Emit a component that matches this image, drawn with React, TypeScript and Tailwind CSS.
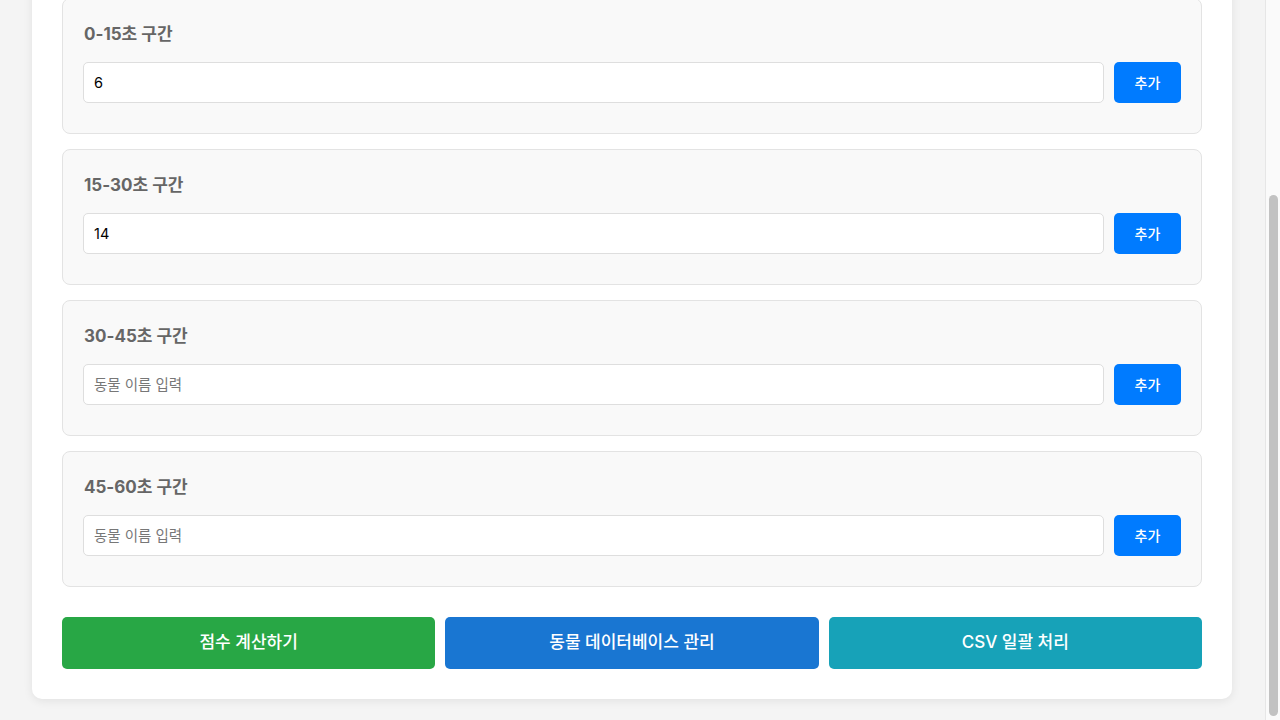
import React from "react";

const font = { fontFamily: "Inter, 'Noto Sans CJK KR', sans-serif" };

const segments = [
  { label: "0-15초 구간", value: "6" },
  { label: "15-30초 구간", value: "14" },
  { label: "30-45초 구간", value: "" },
  { label: "45-60초 구간", value: "" },
];

function Segment({ label, value }: { label: string; value: string }) {
  return (
    <div className="mb-[15px] rounded-lg border border-[#e3e3e3] bg-[#f9f9f9] px-5 pt-5 pb-[30px]">
      <div className="mb-[11px] flex h-[32px] items-center pl-px text-[17px] font-bold text-[#666]">{label}</div>
      <div className="flex gap-[10px]">
        <input
          defaultValue={value}
          placeholder="동물 이름 입력"
          className="h-[41px] flex-1 rounded-[5px] border border-[#dedede] bg-white px-[10px] text-[14.5px] text-black outline-none placeholder:text-[#777]"
        />
        <button className="h-[41px] w-[67px] rounded-[5px] bg-[#007bff] text-[14px] font-medium text-white">추가</button>
      </div>
    </div>
  );
}

export default function App() {
  return (
    <div className="flex h-[720px] w-full overflow-hidden bg-[#f4f4f4]" style={font}>
      <div className="flex flex-1 flex-col justify-end overflow-hidden pb-[21px]">
        <div className="ml-[32px] w-[1200px] shrink-0 rounded-[10px] bg-white px-[30px] pt-[30px] pb-[30px] shadow-[0_2px_10px_rgba(0,0,0,0.08)]">
          {segments.map((s) => (
            <Segment key={s.label} label={s.label} value={s.value} />
          ))}
          <div className="mt-[30px] grid grid-cols-3 gap-[10px]">
            <button className="h-[52px] rounded-[5px] bg-[#28a745] text-[17px] font-medium text-white">점수 계산하기</button>
            <button className="h-[52px] rounded-[5px] bg-[#1976d2] text-[17px] font-medium text-white">동물 데이터베이스 관리</button>
            <button className="h-[52px] rounded-[5px] bg-[#17a2b8] text-[17px] font-medium text-white">CSV 일괄 처리</button>
          </div>
        </div>
      </div>
      {/* fake scrollbar */}
      <div className="flex w-[15px] shrink-0 flex-col border-l border-[#e6e6e6] bg-[#fafafa] pl-[3px] pr-[2px] pt-[195px] pb-[4px]">
        <div className="flex-1 rounded-full bg-[#c2c2c2]" />
      </div>
    </div>
  );
}
